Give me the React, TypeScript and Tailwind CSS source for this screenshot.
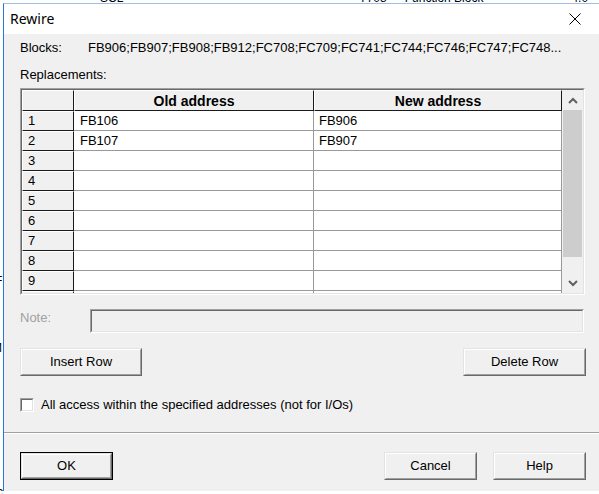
const rows = [
  { n: '1', a: 'FB106', b: 'FB906' },
  { n: '2', a: 'FB107', b: 'FB907' },
  { n: '3', a: '', b: '' },
  { n: '4', a: '', b: '' },
  { n: '5', a: '', b: '' },
  { n: '6', a: '', b: '' },
  { n: '7', a: '', b: '' },
  { n: '8', a: '', b: '' },
  { n: '9', a: '', b: '' },
  { n: '10', a: '', b: '' },
];

const Btn = ({ label, w, isDefault }: { label: string; w: string; isDefault?: boolean }) => {
  const inner = (
    <div className="h-full border border-t-[#e3e3e3] border-l-[#e3e3e3] border-b-[#696969] border-r-[#696969]">
      <div className="h-full flex items-center justify-center bg-[#f0f0f0] border border-t-white border-l-white border-b-[#a0a0a0] border-r-[#a0a0a0]">
        {label}
      </div>
    </div>
  );
  return (
    <div className={`${w} h-[28px] ${isDefault ? 'border border-black' : ''}`}>{inner}</div>
  );
};

const HeadCell = ({ w, children }: { w: string; children?: React.ReactNode }) => (
  <div
    className={`${w} h-full flex items-center justify-center bg-[#f0f0f0] border-t border-l border-t-white border-l-white border-r border-b border-r-[#1a1a1a] border-b-[#1a1a1a] font-bold text-[14px]`}
  >
    {children}
  </div>
);

const Chevron = ({ up }: { up?: boolean }) => (
  <svg width="10" height="7" viewBox="0 0 10 7">
    <polyline
      points={up ? '1,6 5,2 9,6' : '1,1 5,5 9,1'}
      fill="none"
      stroke="#606060"
      strokeWidth="2"
    />
  </svg>
);

const App = () => {
  return (
    <div className="relative w-[599px] h-[494px] bg-white overflow-hidden font-['Liberation_Sans',Arial,sans-serif] text-[13px] leading-[16px] text-black">
      {/* window behind the dialog */}
      <div className="absolute left-[100px] top-[-10px] text-[12px]">SCL</div>
      <div className="absolute left-[360px] top-[-10px] text-[12px] flex gap-[18px]">
        <span>7708</span>
        <span>Function Block</span>
        <span className="ml-[70px]">4.0</span>
      </div>
      <div className="absolute left-[-5px] top-[273px] text-[12px]">F</div>
      <div className="absolute left-[-5px] top-[296px] text-[12px]">[</div>
      <div className="absolute left-[-5px] top-[318px] text-[12px]">[</div>
      <div className="absolute left-[-8px] top-[340px] text-[12px]">M</div>
      <div className="absolute left-[-3px] top-[484px] text-[12px]">c</div>
      <div className="absolute left-[403px] top-[484px] text-[12px] text-[#555]">.................</div>

      {/* dialog */}
      <div className="absolute left-[3px] top-[3px] w-[600px] h-[488px] bg-[#f0f0f0] border-l border-t border-l-[#2b78d1] border-t-[#9fbfe4] flex flex-col">
        <div className="h-[30px] bg-white flex items-center pl-[6px] pr-[12px]">
          <span className="font-['Noto_Sans',sans-serif] text-[14px]">Rewire</span>
          <svg className="ml-auto mr-[10px]" width="12" height="12" viewBox="0 0 12 12">
            <path d="M0.5 0.5 L11.5 11.5 M11.5 0.5 L0.5 11.5" stroke="#000" strokeWidth="1" />
          </svg>
        </div>

        <div className="pl-[16px] flex flex-col w-[582px]">
          <div className="flex mt-[6px]">
            <span className="w-[68px]">Blocks:</span>
            <span>FB906;FB907;FB908;FB912;FC708;FC709;FC741;FC744;FC746;FC747;FC748...</span>
          </div>
          <div className="mt-[11px]">Replacements:</div>

          {/* grid */}
          <div className="mt-[5px] w-[565px] h-[207px] border border-t-[#a0a0a0] border-l-[#a0a0a0] border-b-white border-r-white">
            <div className="h-full flex border border-t-[#696969] border-l-[#696969] border-b-[#e3e3e3] border-r-[#e3e3e3]">
              <div className="w-[540px] h-full overflow-hidden flex flex-col">
                <div className="h-[21px] flex shrink-0">
                  <HeadCell w="w-[52px]" />
                  <HeadCell w="w-[240px]">Old address</HeadCell>
                  <HeadCell w="w-[248px]">New address</HeadCell>
                </div>
                {rows.map((r) => (
                  <div key={r.n} className="h-[20px] flex shrink-0">
                    <div className="w-[52px] h-full flex items-center pl-[5px] bg-[#f0f0f0] border-t border-l border-t-white border-l-white border-r border-b border-r-[#1a1a1a] border-b-[#1a1a1a]">
                      {r.n}
                    </div>
                    <div className="w-[240px] h-full flex items-center pl-[6px] bg-white border-r border-b border-[#999]">
                      {r.a}
                    </div>
                    <div className="w-[248px] h-full flex items-center pl-[5px] bg-white border-r border-b border-[#999]">
                      {r.b}
                    </div>
                  </div>
                ))}
              </div>
              <div className="w-[21px] h-full flex flex-col bg-[#f0f0f0]">
                <div className="h-[20px] flex items-center justify-center">
                  <Chevron up />
                </div>
                <div className="h-[147px] ml-[1px] w-[19px] bg-[#cdcdcd]" />
                <div className="h-[16px]" />
                <div className="h-[20px] flex items-center justify-center">
                  <Chevron />
                </div>
              </div>
            </div>
          </div>

          <div className="mt-[14px] flex items-start">
            <span className="w-[70px] pt-[1px] text-[#a0a0a0]">Note:</span>
            <div className="w-[494px] h-[24px] border border-t-[#a0a0a0] border-l-[#a0a0a0] border-b-white border-r-white">
              <div className="h-full border border-t-[#696969] border-l-[#696969] border-b-[#e3e3e3] border-r-[#e3e3e3] bg-[#f0f0f0]" />
            </div>
          </div>

          <div className="mt-[15px] flex justify-between w-[566px]">
            <Btn label="Insert Row" w="w-[122px]" />
            <Btn label="Delete Row" w="w-[123px]" />
          </div>

          <div className="mt-[21px] h-[16px] flex items-center gap-[7px]">
            <div className="w-[14px] h-[14px] border border-t-[#a0a0a0] border-l-[#a0a0a0] border-b-white border-r-white">
              <div className="h-full border border-t-[#696969] border-l-[#696969] border-b-[#e3e3e3] border-r-[#e3e3e3] bg-white" />
            </div>
            <span>All access within the specified addresses (not for I/Os)</span>
          </div>
        </div>

        <div className="mt-[19px] border-t border-b border-t-[#a0a0a0] border-b-white" />

        <div className="mt-[18px] pl-[16px] flex w-[582px]">
          <Btn label="OK" w="w-[93px]" isDefault />
          <div className="ml-auto flex gap-[16px]">
            <Btn label="Cancel" w="w-[93px]" />
            <Btn label="Help" w="w-[93px]" />
          </div>
        </div>
      </div>
    </div>
  );
};

export default App;
